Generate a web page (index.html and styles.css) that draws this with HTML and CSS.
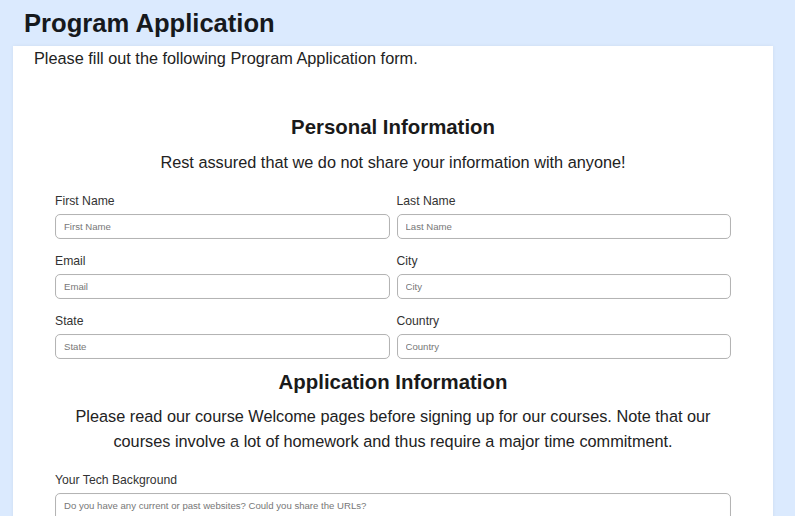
FILE: index.html
```html
<!DOCTYPE html>
<html lang="en">
<head>
<meta charset="utf-8">
<title>Program Application</title>
<link rel="stylesheet" href="styles.css">
</head>
<body>
<header class="page-header">
  <h1 class="page-title">Program Application</h1>
</header>
<main class="card">
  <p class="intro">Please fill out the following Program Application form.</p>
  <form class="app-form">
    <section class="form-section personal">
      <h2 class="section-title">Personal Information</h2>
      <p class="section-lead">Rest assured that we do not share your information with anyone!</p>
      <div class="field-grid">
        <div class="field">
          <label class="field-label" for="first">First Name</label>
          <input class="field-input" id="first" type="text" placeholder="First Name">
        </div>
        <div class="field">
          <label class="field-label" for="last">Last Name</label>
          <input class="field-input" id="last" type="text" placeholder="Last Name">
        </div>
        <div class="field">
          <label class="field-label" for="email">Email</label>
          <input class="field-input" id="email" type="email" placeholder="Email">
        </div>
        <div class="field">
          <label class="field-label" for="city">City</label>
          <input class="field-input" id="city" type="text" placeholder="City">
        </div>
        <div class="field">
          <label class="field-label" for="state">State</label>
          <input class="field-input" id="state" type="text" placeholder="State">
        </div>
        <div class="field">
          <label class="field-label" for="country">Country</label>
          <input class="field-input" id="country" type="text" placeholder="Country">
        </div>
      </div>
    </section>
    <section class="form-section application">
      <h2 class="section-title">Application Information</h2>
      <p class="section-lead">Please read our course Welcome pages before signing up for our courses. Note that our courses involve a lot of homework and thus require a major time commitment.</p>
      <div class="field field-wide">
        <label class="field-label" for="tech">Your Tech Background</label>
        <textarea class="field-input field-textarea" id="tech" placeholder="Do you have any current or past websites? Could you share the URLs?"></textarea>
      </div>
    </section>
  </form>
</main>
</body>
</html>
```

FILE: styles.css
```css
* {
  box-sizing: border-box;
}

html, body {
  margin: 0;
  padding: 0;
}

body {
  background: #dbeafe;
  font-family: "Liberation Sans", Arial, Helvetica, sans-serif;
  color: #222;
}

.page-header {
  padding: 9px 0 0 24px;
  height: 46px;
}

.page-title {
  margin: 0;
  font-size: 25.6px;
  line-height: normal;
  font-weight: bold;
  color: #16191d;
}

.card {
  margin-left: 13px;
  width: 760px;
  background: #ffffff;
  padding: 3px 21px 40px;
  box-shadow: 0 0 4px rgba(0, 0, 0, 0.06);
  min-height: 600px;
}

.intro {
  margin: 0;
  font-size: 16.3px;
  line-height: normal;
  color: #222;
}

.app-form {
  width: 676px;
  margin: 0 auto;
}

.form-section.personal {
  margin-top: 48px;
}

.form-section.application {
  margin-top: 11.5px;
}

.section-title {
  margin: 0;
  text-align: center;
  font-size: 20.4px;
  line-height: normal;
  font-weight: bold;
  color: #1a1a1a;
}

.section-lead {
  margin: 10.5px 0 0;
  text-align: center;
  font-size: 16.3px;
  line-height: 1.5;
  color: #222;
}

.field-grid {
  margin-top: 20px;
  display: grid;
  grid-template-columns: 1fr 1fr;
  column-gap: 7px;
  row-gap: 14.5px;
}

.field {
  display: flex;
  flex-direction: column;
  gap: 6.5px;
}

.field-wide {
  margin-top: 19.5px;
}

.field-label {
  font-size: 12.2px;
  line-height: normal;
  color: #333;
}

.field-input {
  height: 25px;
  width: 100%;
  border: 1px solid #b4b4b4;
  border-radius: 5px;
  padding: 0 8px;
  font-family: "Liberation Sans", Arial, sans-serif;
  font-size: 9.6px;
  color: #333;
  background: #fff;
  box-shadow: inset 0 0 1px rgba(0, 0, 0, 0.08);
  outline: none;
}

.field-input::placeholder {
  color: #777;
}

.field-textarea {
  height: 70px;
  padding: 6px 8px;
  resize: none;
  display: block;
}
```
